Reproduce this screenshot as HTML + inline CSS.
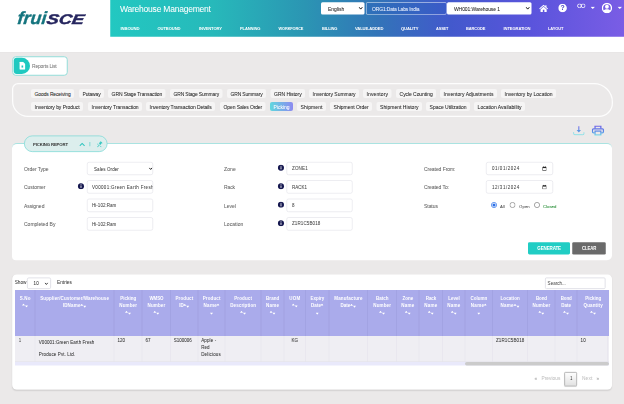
<!DOCTYPE html>
<html lang="en"><head><meta charset="utf-8"><title>Warehouse Management - Picking Report</title>
<style>
html,body{margin:0;padding:0}
body{width:624px;height:404px;overflow:hidden;position:relative;background:#ebe9e9;font-family:"Liberation Sans",sans-serif;}
#sc{position:absolute;left:0;top:0;width:2496px;height:1616px;transform:scale(.25);transform-origin:0 0}
.t{position:absolute;white-space:nowrap;display:block}
.n{-webkit-text-stroke:0.16px currentColor}
svg{display:block}
</style></head>
<body>
<div id="sc">
<div style="position:absolute;left:0px;top:0px;width:2496px;height:208px;background:#fff;box-shadow:0 1.6px 4.8px rgba(0,0,0,.07)"></div>
<div style="position:absolute;left:441.2px;top:0px;width:2054.8px;height:146.8px;background:linear-gradient(90deg,#22c8c1 0%,#27b9ba 20%,#2b95b3 38%,#3274b8 52%,#4259cc 66%,#5a54dc 82%,#7a5de5 100%)"></div>
<div style="position:absolute;left:67.6px;top:28px;height:88px;line-height:88px;white-space:nowrap;font-style:italic;font-weight:700;"><span style="display:inline-block;font-size:70.4px;color:#15757f;-webkit-text-stroke:1.4px #15757f;transform-origin:0 80%;transform:scaleX(1.02) skewX(-6deg)">frui</span><span style="display:inline-block;font-size:56px;color:#26265f;-webkit-text-stroke:1.8px #26265f;transform-origin:0 80%;transform:scaleX(1.30) skewX(-8deg);margin-left:2.4px">SCE</span></div>
<span class="t n" id="t0" style="left:480px;top:12.2px;font-size:34px;line-height:47.6px;color:#fff;font-weight:400;letter-spacing:-0.89px;">Warehouse Management</span>
<span class="t" id="t1" style="left:482px;top:101.28px;font-size:17px;line-height:23.8px;color:#fff;font-weight:700;letter-spacing:-0.51px;transform-origin:0 50%;transform:scaleX(0.9945);">INBOUND</span>
<span class="t" id="t2" style="left:630px;top:101.28px;font-size:17px;line-height:23.8px;color:#fff;font-weight:700;letter-spacing:-0.51px;transform-origin:0 50%;transform:scaleX(0.9705);">OUTBOUND</span>
<span class="t" id="t3" style="left:796px;top:101.28px;font-size:17px;line-height:23.8px;color:#fff;font-weight:700;letter-spacing:-0.51px;transform-origin:0 50%;transform:scaleX(0.9754);">INVENTORY</span>
<span class="t" id="t4" style="left:960px;top:101.28px;font-size:17px;line-height:23.8px;color:#fff;font-weight:700;letter-spacing:-0.51px;transform-origin:0 50%;transform:scaleX(0.9606);">PLANNING</span>
<span class="t" id="t5" style="left:1114px;top:101.28px;font-size:17px;line-height:23.8px;color:#fff;font-weight:700;letter-spacing:-0.51px;transform-origin:0 50%;transform:scaleX(0.9138);">WORKFORCE</span>
<span class="t" id="t6" style="left:1288px;top:101.28px;font-size:17px;line-height:23.8px;color:#fff;font-weight:700;letter-spacing:-0.51px;transform-origin:0 50%;transform:scaleX(0.9524);">BILLING</span>
<span class="t" id="t7" style="left:1420px;top:101.28px;font-size:17px;line-height:23.8px;color:#fff;font-weight:700;letter-spacing:-0.51px;transform-origin:0 50%;transform:scaleX(0.9701);">VALUE-ADDED</span>
<span class="t" id="t8" style="left:1604px;top:101.28px;font-size:17px;line-height:23.8px;color:#fff;font-weight:700;letter-spacing:-0.51px;transform-origin:0 50%;transform:scaleX(0.9764);">QUALITY</span>
<span class="t" id="t9" style="left:1744px;top:101.28px;font-size:17px;line-height:23.8px;color:#fff;font-weight:700;letter-spacing:-0.51px;transform-origin:0 50%;transform:scaleX(0.9118);">ASSET</span>
<span class="t" id="t10" style="left:1864px;top:101.28px;font-size:17px;line-height:23.8px;color:#fff;font-weight:700;letter-spacing:-0.51px;transform-origin:0 50%;transform:scaleX(0.9390);">BARCODE</span>
<span class="t" id="t11" style="left:2014px;top:101.28px;font-size:17px;line-height:23.8px;color:#fff;font-weight:700;letter-spacing:-0.51px;transform-origin:0 50%;transform:scaleX(0.9738);">INTEGRATION</span>
<span class="t" id="t12" style="left:2192px;top:101.28px;font-size:17px;line-height:23.8px;color:#fff;font-weight:700;letter-spacing:-0.51px;transform-origin:0 50%;transform:scaleX(0.9401);">LAYOUT</span>
<div style="position:absolute;left:1284px;top:8.8px;width:174px;height:49.2px;background:#fff;border-radius:6px"></div>
<span class="t n" id="t13" style="left:1312px;top:21.2px;font-size:20px;line-height:28px;color:#222;font-weight:400;letter-spacing:-0px;">English</span>
<svg style="position:absolute;left:1434.4px;top:26.4px" width="17.6" height="14.4" viewBox="0 0 8 6"><path d="M1 1 L4 4.5 L7 1" fill="none" stroke="#111" stroke-width="1.8"/></svg>
<div style="position:absolute;left:1464px;top:8.8px;width:322px;height:49.2px;box-sizing:border-box;border:2.4px solid rgba(255,255,255,.85);border-radius:6px;background:rgba(40,90,190,.25)"></div>
<span class="t n" id="t14" style="left:1488px;top:21.2px;font-size:20px;line-height:28px;color:#eef3ff;font-weight:400;letter-spacing:-0.6px;transform-origin:0 50%;transform:scaleX(0.9961);">ORG1:Data Labs India</span>
<div style="position:absolute;left:1788px;top:8.8px;width:338px;height:49.2px;background:#fff;border-radius:6px"></div>
<span class="t n" id="t15" style="left:1816px;top:21.2px;font-size:20px;line-height:28px;color:#222;font-weight:400;letter-spacing:-0.4px;">WH001:Warehouse 1</span>
<svg style="position:absolute;left:2102.4px;top:26.4px" width="17.6" height="14.4" viewBox="0 0 8 6"><path d="M1 1 L4 4.5 L7 1" fill="none" stroke="#111" stroke-width="1.8"/></svg>
<svg style="position:absolute;left:2156px;top:17.2px" width="36.8" height="30.8" viewBox="0 0 24 20"><path d="M12 1 L0.5 11 L2.3 12.8 L12 4.6 L21.7 12.8 L23.5 11 L19.5 7.5 V2.5 H16.5 V4.9 Z M12 6.6 L4 13.4 V20 H10 V14 H14 V20 H20 V13.4 Z" fill="#fff"/></svg>
<svg style="position:absolute;left:2233.2px;top:15.2px" width="34.4" height="34.4" viewBox="0 0 20 20"><circle cx="10" cy="10" r="10" fill="#fff"/><text x="10" y="15.6" font-size="16" font-weight="700" text-anchor="middle" fill="#4742c4" font-family="Liberation Sans, sans-serif">?</text></svg>
<svg style="position:absolute;left:2308px;top:14.4px" width="34.4" height="18.4" viewBox="0 0 26 14"><rect x="1.5" y="1.5" width="12" height="11" rx="5.5" fill="none" stroke="#fff" stroke-width="2.6"/><rect x="12.5" y="1.5" width="12" height="11" rx="5.5" fill="none" stroke="#fff" stroke-width="2.6"/></svg>
<svg style="position:absolute;left:2361.6px;top:25.6px" width="18.4" height="10.4" viewBox="0 0 10 5"><path d="M0 0 H10 L5 5 Z" fill="#fff"/></svg>
<svg style="position:absolute;left:2407.2px;top:11.2px" width="41.6" height="41.6" viewBox="0 0 24 24"><circle cx="12" cy="12" r="10.4" fill="none" stroke="#fff" stroke-width="3.2"/><circle cx="12" cy="9.2" r="4.4" fill="#fff"/><path d="M3.8 19 C5.5 13.8 18.5 13.8 20.2 19 C17 23 7 23 3.8 19 Z" fill="#fff"/></svg>
<svg style="position:absolute;left:2470.4px;top:25.6px" width="18.4" height="10.4" viewBox="0 0 10 5"><path d="M0 0 H10 L5 5 Z" fill="#fff"/></svg>
<div style="position:absolute;left:48.8px;top:224.8px;width:222.4px;height:78.4px;box-sizing:border-box;background:#fff;border:4px solid #93ddd9;border-radius:13.6px"></div>
<div style="position:absolute;left:54.8px;top:230.8px;width:65.2px;height:65.6px;background:#20c9c0;border-radius:12px 32.8px 32.8px 12px"></div>
<svg style="position:absolute;left:77.2px;top:247.2px" width="24.8" height="31.6" viewBox="0 0 14 19"><path d="M0 1.5 Q0 0 1.5 0 H8.5 L14 5.5 V17.5 Q14 19 12.5 19 H1.5 Q0 19 0 17.5 Z" fill="#fff"/><rect x="5" y="9" width="4" height="5" fill="#22c7c0"/></svg>
<span class="t n" id="t16" style="left:128px;top:250px;font-size:20px;line-height:28px;color:#777;font-weight:400;letter-spacing:-0.6px;transform-origin:0 50%;transform:scaleX(0.9888);">Reports List</span>
<div style="position:absolute;left:48px;top:332px;width:2404px;height:136px;box-sizing:border-box;border:5px solid #fdfdfd;border-radius:24px 76px 56px 64px;background:#ebe9e9"></div>
<div style="position:absolute;left:124px;top:356.4px;width:172px;height:36px;border-radius:8px;background:#f6f5f5"></div>
<span class="t n" id="t17" style="left:138.4px;top:362.6px;font-size:20px;line-height:28px;color:#222;font-weight:400;letter-spacing:-0.55px;">Goods Receiving</span>
<div style="position:absolute;left:316px;top:356.4px;width:100px;height:36px;border-radius:8px;background:#f6f5f5"></div>
<span class="t n" id="t18" style="left:330.4px;top:362.6px;font-size:20px;line-height:28px;color:#222;font-weight:400;letter-spacing:-0.6px;transform-origin:0 50%;transform:scaleX(0.9928);">Putaway</span>
<div style="position:absolute;left:432px;top:356.4px;width:230px;height:36px;border-radius:8px;background:#f6f5f5"></div>
<span class="t n" id="t19" style="left:446.4px;top:362.6px;font-size:20px;line-height:28px;color:#222;font-weight:400;letter-spacing:-0.44px;">GRN Stage Transaction</span>
<div style="position:absolute;left:680px;top:356.4px;width:210px;height:36px;border-radius:8px;background:#f6f5f5"></div>
<span class="t n" id="t20" style="left:694.4px;top:362.6px;font-size:20px;line-height:28px;color:#222;font-weight:400;letter-spacing:-0.6px;transform-origin:0 50%;transform:scaleX(0.9935);">GRN Stage Summary</span>
<div style="position:absolute;left:908px;top:356.4px;width:156px;height:36px;border-radius:8px;background:#f6f5f5"></div>
<span class="t n" id="t21" style="left:922.4px;top:362.6px;font-size:20px;line-height:28px;color:#222;font-weight:400;letter-spacing:-0.6px;transform-origin:0 50%;transform:scaleX(0.9924);">GRN Summary</span>
<div style="position:absolute;left:1082px;top:356.4px;width:138px;height:36px;border-radius:8px;background:#f6f5f5"></div>
<span class="t n" id="t22" style="left:1096.4px;top:362.6px;font-size:20px;line-height:28px;color:#222;font-weight:400;letter-spacing:-0.2px;">GRN History</span>
<div style="position:absolute;left:1236px;top:356.4px;width:200px;height:36px;border-radius:8px;background:#f6f5f5"></div>
<span class="t n" id="t23" style="left:1250.4px;top:362.6px;font-size:20px;line-height:28px;color:#222;font-weight:400;letter-spacing:-0.08px;">Inventory Summary</span>
<div style="position:absolute;left:1452px;top:356.4px;width:114px;height:36px;border-radius:8px;background:#f6f5f5"></div>
<span class="t n" id="t24" style="left:1466.4px;top:362.6px;font-size:20px;line-height:28px;color:#222;font-weight:400;letter-spacing:0.41px;">Inventory</span>
<div style="position:absolute;left:1584px;top:356.4px;width:160px;height:36px;border-radius:8px;background:#f6f5f5"></div>
<span class="t n" id="t25" style="left:1598.4px;top:362.6px;font-size:20px;line-height:28px;color:#222;font-weight:400;letter-spacing:-0.26px;">Cycle Counting</span>
<div style="position:absolute;left:1760px;top:356.4px;width:228px;height:36px;border-radius:8px;background:#f6f5f5"></div>
<span class="t n" id="t26" style="left:1774.4px;top:362.6px;font-size:20px;line-height:28px;color:#222;font-weight:400;letter-spacing:0.15px;">Inventory Adjustments</span>
<div style="position:absolute;left:2004px;top:356.4px;width:220px;height:36px;border-radius:8px;background:#f6f5f5"></div>
<span class="t n" id="t27" style="left:2018.4px;top:362.6px;font-size:20px;line-height:28px;color:#222;font-weight:400;letter-spacing:0.09px;">Inventory by Location</span>
<div style="position:absolute;left:124px;top:407.6px;width:208px;height:36px;border-radius:8px;background:#f6f5f5"></div>
<span class="t n" id="t28" style="left:138.4px;top:413.8px;font-size:20px;line-height:28px;color:#222;font-weight:400;letter-spacing:-0.17px;">Inventory by Product</span>
<div style="position:absolute;left:352px;top:407.6px;width:216px;height:36px;border-radius:8px;background:#f6f5f5"></div>
<span class="t n" id="t29" style="left:366.4px;top:413.8px;font-size:20px;line-height:28px;color:#222;font-weight:400;letter-spacing:-0.15px;">Inventory Transaction</span>
<div style="position:absolute;left:584px;top:407.6px;width:276px;height:36px;border-radius:8px;background:#f6f5f5"></div>
<span class="t n" id="t30" style="left:598.4px;top:413.8px;font-size:20px;line-height:28px;color:#222;font-weight:400;letter-spacing:-0.34px;">Inventory Transaction Details</span>
<div style="position:absolute;left:880px;top:407.6px;width:182px;height:36px;border-radius:8px;background:#f6f5f5"></div>
<span class="t n" id="t31" style="left:894.4px;top:413.8px;font-size:20px;line-height:28px;color:#222;font-weight:400;letter-spacing:-0.45px;">Open Sales Order</span>
<div style="position:absolute;left:1080px;top:407.6px;width:92px;height:36px;border-radius:8px;background:linear-gradient(90deg,#5fd8de,#8d8af0)"></div>
<span class="t n" id="t32" style="left:1094.4px;top:413.8px;font-size:20px;line-height:28px;color:#fff;font-weight:400;letter-spacing:-0.07px;">Picking</span>
<div style="position:absolute;left:1188px;top:407.6px;width:116px;height:36px;border-radius:8px;background:#f6f5f5"></div>
<span class="t n" id="t33" style="left:1202.4px;top:413.8px;font-size:20px;line-height:28px;color:#222;font-weight:400;letter-spacing:0.44px;">Shipment</span>
<div style="position:absolute;left:1320px;top:407.6px;width:168px;height:36px;border-radius:8px;background:#f6f5f5"></div>
<span class="t n" id="t34" style="left:1334.4px;top:413.8px;font-size:20px;line-height:28px;color:#222;font-weight:400;letter-spacing:-0.08px;">Shipment Order</span>
<div style="position:absolute;left:1506px;top:407.6px;width:182px;height:36px;border-radius:8px;background:#f6f5f5"></div>
<span class="t n" id="t35" style="left:1520.4px;top:413.8px;font-size:20px;line-height:28px;color:#222;font-weight:400;letter-spacing:0.11px;">Shipment History</span>
<div style="position:absolute;left:1704px;top:407.6px;width:176px;height:36px;border-radius:8px;background:#f6f5f5"></div>
<span class="t n" id="t36" style="left:1718.4px;top:413.8px;font-size:20px;line-height:28px;color:#222;font-weight:400;letter-spacing:-0.06px;">Space Utilization</span>
<div style="position:absolute;left:1896px;top:407.6px;width:204px;height:36px;border-radius:8px;background:#f6f5f5"></div>
<span class="t n" id="t37" style="left:1910.4px;top:413.8px;font-size:20px;line-height:28px;color:#222;font-weight:400;letter-spacing:0.09px;">Location Availability</span>
<svg style="position:absolute;left:2292.4px;top:502.4px" width="46.4" height="40" viewBox="0 0 23.2 20"><defs><linearGradient id="g1" gradientUnits="userSpaceOnUse" x1="0" y1="0" x2="0" y2="20"><stop offset="0" stop-color="#8b78ea"/><stop offset="0.55" stop-color="#5f95e4"/><stop offset="1" stop-color="#74dfe6"/></linearGradient></defs><path d="M11.6 1.6 V11.4" fill="none" stroke="url(#g1)" stroke-width="2.4"/><path d="M7.2 8.8 H16 L11.6 14 Z" fill="#5f98e3"/><path d="M1.2 13.6 V16 Q1.2 18.6 3.8 18.6 H19.4 Q22 18.6 22 16 V13.6" fill="none" stroke="#7cdfe8" stroke-width="1.9"/></svg>
<svg style="position:absolute;left:2367.2px;top:502.4px" width="49.6" height="40.8" viewBox="0 0 24.8 20.4"><defs><linearGradient id="g2" gradientUnits="userSpaceOnUse" x1="0" y1="0" x2="0" y2="20.4"><stop offset="0" stop-color="#7263e8"/><stop offset="0.55" stop-color="#5a84e6"/><stop offset="1" stop-color="#6fdde8"/></linearGradient></defs><path d="M6.6 6.4 V1.4 H18.2 V6.4" fill="none" stroke="url(#g2)" stroke-width="2.6"/><path d="M6 14.6 H3.4 Q1.4 14.6 1.4 12.6 V8.6 Q1.4 6.6 3.4 6.6 H21.4 Q23.4 6.6 23.4 8.6 V12.6 Q23.4 14.6 21.4 14.6 H18.8" fill="none" stroke="url(#g2)" stroke-width="2.6"/><rect x="6.6" y="11.2" width="11.6" height="7.8" fill="none" stroke="url(#g2)" stroke-width="2.4"/></svg>
<div style="position:absolute;left:48px;top:572px;width:2400px;height:468.8px;box-sizing:border-box;background:#fff;border-top:4px solid #a9e3e1;border-radius:20px 20px 20px 16px"></div>
<div style="position:absolute;left:96px;top:542px;width:334px;height:66px;box-sizing:border-box;background:#dceeed;border:3.6px solid #7cd9d5;border-radius:33.2px"></div>
<span class="t" id="t38" style="left:132px;top:565.72px;font-size:17px;line-height:23.8px;color:#333;font-weight:700;letter-spacing:-0.47px;">PICKING REPORT</span>
<svg style="position:absolute;left:316.8px;top:569.6px" width="23.2" height="15.6" viewBox="0 0 10 6"><path d="M0.8 5.3 L5 1.3 L9.2 5.3" fill="none" stroke="#2cc4be" stroke-width="1.75"/></svg>
<div style="position:absolute;left:358.4px;top:568px;width:2.6px;height:17.2px;background:#62d0cb"></div>
<svg style="position:absolute;left:386.4px;top:562.8px" width="25.6" height="28" viewBox="0 0 13 14"><path d="M8.2 0.4 L12.6 4.8 L10.2 5.2 L8.4 8.6 L4.4 4.6 L7.8 2.8 Z" fill="#30c6c0"/><path d="M5.6 7.4 L1.2 12.4 L2.4 13 L6.8 8.6 Z" fill="#30c6c0"/><path d="M1.6 5.4 L4.2 7.2 L2.8 8.4 Z M8.6 10.2 L10.4 13 L7.2 11.4 Z" fill="#30c6c0"/></svg>
<span class="t n" id="t39" style="left:96px;top:662px;font-size:20px;line-height:28px;color:#626262;font-weight:400;letter-spacing:-0.21px;">Order Type</span>
<span class="t n" id="t40" style="left:96px;top:735.6px;font-size:20px;line-height:28px;color:#626262;font-weight:400;letter-spacing:-0.14px;">Customer</span>
<span class="t n" id="t41" style="left:96px;top:809.2px;font-size:20px;line-height:28px;color:#626262;font-weight:400;letter-spacing:-0.09px;">Assigned</span>
<span class="t n" id="t42" style="left:96px;top:883.2px;font-size:20px;line-height:28px;color:#626262;font-weight:400;letter-spacing:-0px;">Completed By</span>
<div style="position:absolute;left:348px;top:647.6px;width:264px;height:52.8px;box-sizing:border-box;background:#fff;border:2.8px solid #dadae2;border-radius:8px"></div>
<span class="t n" id="t43" style="left:376px;top:663.8px;font-size:18px;line-height:25.2px;color:#444;font-weight:400;letter-spacing:0.31px;">Sales Order</span>
<svg style="position:absolute;left:594.8px;top:669.2px" width="15.2" height="12" viewBox="0 0 8 6"><path d="M1 1 L4 4.5 L7 1" fill="none" stroke="#222" stroke-width="2"/></svg>
<div style="position:absolute;left:348px;top:721.2px;width:264px;height:52.8px;box-sizing:border-box;background:#fff;border:2.8px solid #dadae2;border-radius:8px"></div>
<div style="position:absolute;left:368px;top:728px;width:241.6px;height:40px;overflow:hidden"><span class="t n" id="t44" style="left:0px;top:9.4px;font-size:18px;line-height:25.2px;color:#444;font-weight:400;letter-spacing:1.3px;">V00001:Green Earth Fresh</span></div>
<div style="position:absolute;left:348px;top:794.8px;width:264px;height:52.8px;box-sizing:border-box;background:#fff;border:2.8px solid #dadae2;border-radius:8px"></div>
<span class="t n" id="t45" style="left:368px;top:811px;font-size:18px;line-height:25.2px;color:#444;font-weight:400;letter-spacing:0.14px;">Hi-102:Ram</span>
<div style="position:absolute;left:348px;top:868.8px;width:264px;height:52.8px;box-sizing:border-box;background:#fff;border:2.8px solid #dadae2;border-radius:8px"></div>
<span class="t n" id="t46" style="left:368px;top:885px;font-size:18px;line-height:25.2px;color:#444;font-weight:400;letter-spacing:0.14px;">Hi-102:Ram</span>
<svg style="position:absolute;left:311.2px;top:731.6px" width="25.6" height="25.6" viewBox="0 0 16 16"><circle cx="8" cy="8" r="7.6" fill="#15174f"/><rect x="7" y="6.6" width="2.2" height="5.6" fill="#fff"/><circle cx="8.1" cy="4.4" r="1.3" fill="#fff"/></svg>
<span class="t n" id="t47" style="left:896px;top:662px;font-size:20px;line-height:28px;color:#626262;font-weight:400;letter-spacing:0.5px;">Zone</span>
<span class="t n" id="t48" style="left:896px;top:735.6px;font-size:20px;line-height:28px;color:#626262;font-weight:400;letter-spacing:-0.49px;">Rack</span>
<span class="t n" id="t49" style="left:896px;top:809.2px;font-size:20px;line-height:28px;color:#626262;font-weight:400;letter-spacing:-0.04px;">Level</span>
<span class="t n" id="t50" style="left:896px;top:883.2px;font-size:20px;line-height:28px;color:#626262;font-weight:400;letter-spacing:0.25px;">Location</span>
<div style="position:absolute;left:1146px;top:647.6px;width:264px;height:52.8px;box-sizing:border-box;background:#fff;border:2.8px solid #dadae2;border-radius:8px"></div>
<span class="t n" id="t51" style="left:1168px;top:662.2px;font-size:18px;line-height:25.2px;color:#444;font-weight:400;letter-spacing:0.68px;">ZONE1</span>
<svg style="position:absolute;left:1111.2px;top:658.4px" width="25.6" height="25.6" viewBox="0 0 16 16"><circle cx="8" cy="8" r="7.6" fill="#15174f"/><rect x="7" y="6.6" width="2.2" height="5.6" fill="#fff"/><circle cx="8.1" cy="4.4" r="1.3" fill="#fff"/></svg>
<div style="position:absolute;left:1146px;top:721.2px;width:264px;height:52.8px;box-sizing:border-box;background:#fff;border:2.8px solid #dadae2;border-radius:8px"></div>
<span class="t n" id="t52" style="left:1168px;top:735.8px;font-size:18px;line-height:25.2px;color:#444;font-weight:400;letter-spacing:-0.12px;">RACK1</span>
<svg style="position:absolute;left:1111.2px;top:732px" width="25.6" height="25.6" viewBox="0 0 16 16"><circle cx="8" cy="8" r="7.6" fill="#15174f"/><rect x="7" y="6.6" width="2.2" height="5.6" fill="#fff"/><circle cx="8.1" cy="4.4" r="1.3" fill="#fff"/></svg>
<div style="position:absolute;left:1146px;top:794.8px;width:264px;height:52.8px;box-sizing:border-box;background:#fff;border:2.8px solid #dadae2;border-radius:8px"></div>
<span class="t n" id="t53" style="left:1168px;top:809.4px;font-size:18px;line-height:25.2px;color:#444;font-weight:400;letter-spacing:1.42px;">8</span>
<svg style="position:absolute;left:1111.2px;top:805.6px" width="25.6" height="25.6" viewBox="0 0 16 16"><circle cx="8" cy="8" r="7.6" fill="#15174f"/><rect x="7" y="6.6" width="2.2" height="5.6" fill="#fff"/><circle cx="8.1" cy="4.4" r="1.3" fill="#fff"/></svg>
<div style="position:absolute;left:1146px;top:868.8px;width:264px;height:52.8px;box-sizing:border-box;background:#fff;border:2.8px solid #dadae2;border-radius:8px"></div>
<span class="t n" id="t54" style="left:1168px;top:883.4px;font-size:18px;line-height:25.2px;color:#444;font-weight:400;letter-spacing:0.44px;">Z1R1C5B018</span>
<svg style="position:absolute;left:1111.2px;top:879.6px" width="25.6" height="25.6" viewBox="0 0 16 16"><circle cx="8" cy="8" r="7.6" fill="#15174f"/><rect x="7" y="6.6" width="2.2" height="5.6" fill="#fff"/><circle cx="8.1" cy="4.4" r="1.3" fill="#fff"/></svg>
<span class="t n" id="t55" style="left:1696px;top:662px;font-size:20px;line-height:28px;color:#626262;font-weight:400;letter-spacing:-0.26px;">Created From:</span>
<span class="t n" id="t56" style="left:1696px;top:735.6px;font-size:20px;line-height:28px;color:#626262;font-weight:400;letter-spacing:-0.31px;">Created To:</span>
<span class="t n" id="t57" style="left:1696px;top:809.2px;font-size:20px;line-height:28px;color:#626262;font-weight:400;letter-spacing:-0.18px;">Status</span>
<div style="position:absolute;left:1944px;top:647.6px;width:268px;height:52.8px;box-sizing:border-box;background:#fff;border:2.8px solid #dadae2;border-radius:8px"></div>
<span class="t n" id="t58" style="left:1968px;top:662.2px;font-size:18px;line-height:25.2px;color:#444;font-weight:400;letter-spacing:2.13px;">01/01/2024</span>
<svg style="position:absolute;left:2168.8px;top:665.2px" width="17.6" height="18.4" viewBox="0 0 11 12"><rect x="0" y="1.4" width="11" height="10.6" rx="1.2" fill="#222"/><rect x="1.6" y="4.8" width="7.8" height="5.6" fill="#fff"/><rect x="2.2" y="0" width="1.6" height="3" fill="#222"/><rect x="7.2" y="0" width="1.6" height="3" fill="#222"/></svg>
<div style="position:absolute;left:1944px;top:721.2px;width:268px;height:52.8px;box-sizing:border-box;background:#fff;border:2.8px solid #dadae2;border-radius:8px"></div>
<span class="t n" id="t59" style="left:1968px;top:735.8px;font-size:18px;line-height:25.2px;color:#444;font-weight:400;letter-spacing:2.13px;">12/31/2024</span>
<svg style="position:absolute;left:2168.8px;top:738.8px" width="17.6" height="18.4" viewBox="0 0 11 12"><rect x="0" y="1.4" width="11" height="10.6" rx="1.2" fill="#222"/><rect x="1.6" y="4.8" width="7.8" height="5.6" fill="#fff"/><rect x="2.2" y="0" width="1.6" height="3" fill="#222"/><rect x="7.2" y="0" width="1.6" height="3" fill="#222"/></svg>
<svg style="position:absolute;left:1964px;top:808px" width="24" height="24" viewBox="0 0 16 16"><circle cx="8" cy="8" r="7" fill="#fff" stroke="#2a6fe8" stroke-width="1.8"/><circle cx="8" cy="8" r="4.2" fill="#2a6fe8"/></svg>
<svg style="position:absolute;left:2038px;top:808px" width="24" height="24" viewBox="0 0 16 16"><circle cx="8" cy="8" r="7" fill="#fff" stroke="#666" stroke-width="1.5"/></svg>
<svg style="position:absolute;left:2136px;top:808px" width="24" height="24" viewBox="0 0 16 16"><circle cx="8" cy="8" r="7" fill="#fff" stroke="#666" stroke-width="1.5"/></svg>
<span class="t n" id="t60" style="left:2000px;top:813.72px;font-size:17px;line-height:23.8px;color:#555;font-weight:400;letter-spacing:0.82px;">All</span>
<span class="t n" id="t61" style="left:2076px;top:813.72px;font-size:17px;line-height:23.8px;color:#555;font-weight:400;letter-spacing:0.44px;">Open</span>
<span class="t n" id="t62" style="left:2172px;top:813.72px;font-size:17px;line-height:23.8px;color:#1e8a2e;font-weight:400;letter-spacing:0.07px;">Closed</span>
<div style="position:absolute;left:2112px;top:968.8px;width:168px;height:49.6px;background:#21cdc4;border-radius:5.6px"></div>
<span class="t" id="t63" style="left:2149.2px;top:979.6px;font-size:20px;line-height:28px;color:#fff;font-weight:700;letter-spacing:-0.6px;transform-origin:0 50%;transform:scaleX(0.9042);">GENERATE</span>
<div style="position:absolute;left:2288.8px;top:968.8px;width:134.4px;height:49.6px;background:#6a6a6a;border-radius:5.2px"></div>
<span class="t" id="t64" style="left:2328px;top:979.6px;font-size:20px;line-height:28px;color:#fff;font-weight:700;letter-spacing:-0.6px;transform-origin:0 50%;transform:scaleX(0.8620);">CLEAR</span>
<div style="position:absolute;left:48.8px;top:1097.6px;width:2399.6px;height:460.8px;background:#fff;border-radius:18px;box-shadow:0 2.4px 5.6px rgba(0,0,0,.10)"></div>
<span class="t n" id="t65" style="left:58.8px;top:1117.08px;font-size:19px;line-height:26.6px;color:#444;font-weight:400;letter-spacing:-0.2px;">Show</span>
<div style="position:absolute;left:108px;top:1110px;width:96px;height:46px;box-sizing:border-box;background:#fff;border:3px solid #d8d8e0;border-radius:7.2px"></div>
<span class="t n" id="t66" style="left:134px;top:1121px;font-size:18px;line-height:25.2px;color:#333;font-weight:400;letter-spacing:0.7px;">10</span>
<svg style="position:absolute;left:178.4px;top:1128.8px" width="15.2" height="12" viewBox="0 0 8 6"><path d="M1 1 L4 4.5 L7 1" fill="none" stroke="#222" stroke-width="1.8"/></svg>
<span class="t n" id="t67" style="left:228px;top:1117.08px;font-size:19px;line-height:26.6px;color:#444;font-weight:400;letter-spacing:0.05px;">Entries</span>
<div style="position:absolute;left:2180px;top:1110px;width:242px;height:46px;box-sizing:border-box;background:#fff;border:3px solid #d8d8e0;border-radius:5.6px"></div>
<span class="t n" id="t68" style="left:2190.4px;top:1122.6px;font-size:18px;line-height:25.2px;color:#555;font-weight:400;letter-spacing:0.11px;">Search...</span>
<div style="position:absolute;left:60px;top:1160px;width:2376px;height:184px;background:#aaabeb"></div>
<div style="position:absolute;left:60px;top:1344px;width:2376px;height:104px;background:#efeef3;box-sizing:border-box;border-bottom:2px solid #e0e0e8"></div>
<div style="position:absolute;left:60px;top:1448px;width:2376px;height:14px;background:#e9e9fb"></div>
<div style="position:absolute;left:1860px;top:1448px;width:576px;height:13.6px;background:#cbcbcb;border-radius:6.8px"></div>
<div style="position:absolute;left:139px;top:1160px;width:2px;height:184px;background:rgba(150,150,215,.75)"></div>
<div style="position:absolute;left:139px;top:1344px;width:2px;height:103.2px;background:#e2e1ea"></div>
<div style="position:absolute;left:455px;top:1160px;width:2px;height:184px;background:rgba(150,150,215,.75)"></div>
<div style="position:absolute;left:455px;top:1344px;width:2px;height:103.2px;background:#e2e1ea"></div>
<div style="position:absolute;left:567px;top:1160px;width:2px;height:184px;background:rgba(150,150,215,.75)"></div>
<div style="position:absolute;left:567px;top:1344px;width:2px;height:103.2px;background:#e2e1ea"></div>
<div style="position:absolute;left:681px;top:1160px;width:2px;height:184px;background:rgba(150,150,215,.75)"></div>
<div style="position:absolute;left:681px;top:1344px;width:2px;height:103.2px;background:#e2e1ea"></div>
<div style="position:absolute;left:791px;top:1160px;width:2px;height:184px;background:rgba(150,150,215,.75)"></div>
<div style="position:absolute;left:791px;top:1344px;width:2px;height:103.2px;background:#e2e1ea"></div>
<div style="position:absolute;left:899px;top:1160px;width:2px;height:184px;background:rgba(150,150,215,.75)"></div>
<div style="position:absolute;left:899px;top:1344px;width:2px;height:103.2px;background:#e2e1ea"></div>
<div style="position:absolute;left:1043px;top:1160px;width:2px;height:184px;background:rgba(150,150,215,.75)"></div>
<div style="position:absolute;left:1043px;top:1344px;width:2px;height:103.2px;background:#e2e1ea"></div>
<div style="position:absolute;left:1135px;top:1160px;width:2px;height:184px;background:rgba(150,150,215,.75)"></div>
<div style="position:absolute;left:1135px;top:1344px;width:2px;height:103.2px;background:#e2e1ea"></div>
<div style="position:absolute;left:1221px;top:1160px;width:2px;height:184px;background:rgba(150,150,215,.75)"></div>
<div style="position:absolute;left:1221px;top:1344px;width:2px;height:103.2px;background:#e2e1ea"></div>
<div style="position:absolute;left:1315px;top:1160px;width:2px;height:184px;background:rgba(150,150,215,.75)"></div>
<div style="position:absolute;left:1315px;top:1344px;width:2px;height:103.2px;background:#e2e1ea"></div>
<div style="position:absolute;left:1469px;top:1160px;width:2px;height:184px;background:rgba(150,150,215,.75)"></div>
<div style="position:absolute;left:1469px;top:1344px;width:2px;height:103.2px;background:#e2e1ea"></div>
<div style="position:absolute;left:1585px;top:1160px;width:2px;height:184px;background:rgba(150,150,215,.75)"></div>
<div style="position:absolute;left:1585px;top:1344px;width:2px;height:103.2px;background:#e2e1ea"></div>
<div style="position:absolute;left:1675px;top:1160px;width:2px;height:184px;background:rgba(150,150,215,.75)"></div>
<div style="position:absolute;left:1675px;top:1344px;width:2px;height:103.2px;background:#e2e1ea"></div>
<div style="position:absolute;left:1769px;top:1160px;width:2px;height:184px;background:rgba(150,150,215,.75)"></div>
<div style="position:absolute;left:1769px;top:1344px;width:2px;height:103.2px;background:#e2e1ea"></div>
<div style="position:absolute;left:1859px;top:1160px;width:2px;height:184px;background:rgba(150,150,215,.75)"></div>
<div style="position:absolute;left:1859px;top:1344px;width:2px;height:103.2px;background:#e2e1ea"></div>
<div style="position:absolute;left:1969px;top:1160px;width:2px;height:184px;background:rgba(150,150,215,.75)"></div>
<div style="position:absolute;left:1969px;top:1344px;width:2px;height:103.2px;background:#e2e1ea"></div>
<div style="position:absolute;left:2109px;top:1160px;width:2px;height:184px;background:rgba(150,150,215,.75)"></div>
<div style="position:absolute;left:2109px;top:1344px;width:2px;height:103.2px;background:#e2e1ea"></div>
<div style="position:absolute;left:2219px;top:1160px;width:2px;height:184px;background:rgba(150,150,215,.75)"></div>
<div style="position:absolute;left:2219px;top:1344px;width:2px;height:103.2px;background:#e2e1ea"></div>
<div style="position:absolute;left:2307px;top:1160px;width:2px;height:184px;background:rgba(150,150,215,.75)"></div>
<div style="position:absolute;left:2307px;top:1344px;width:2px;height:103.2px;background:#e2e1ea"></div>
<div style="position:absolute;left:2428px;top:1344px;width:2px;height:103.2px;background:#e2e1ea"></div>
<span class="t" id="t69" style="left:79px;top:1182.6px;font-size:18px;line-height:25.2px;color:#fff;font-weight:700;letter-spacing:0.61px;">S.No</span>
<span style="position:absolute;left:88px;top:1214px;line-height:0"><svg class="s" width="24" height="16.4" viewBox="0 0 11.2 7.6"><path d="M0 3.8 L2.8 0 L5.6 3.8 Z M5.6 3.8 L8.4 7.6 L11.2 3.8 Z" fill="#fff"/></svg></span>
<span class="t" id="t70" style="left:161px;top:1182.6px;font-size:18px;line-height:25.2px;color:#fff;font-weight:700;letter-spacing:0.48px;">Supplier/Customer/Warehouse</span>
<span class="t" id="t71" style="left:251px;top:1211.4px;font-size:18px;line-height:25.2px;color:#fff;font-weight:700;letter-spacing:0.73px;">IDName</span>
<span style="position:absolute;left:321.4px;top:1215.2px;line-height:0"><svg class="s" width="24" height="16.4" viewBox="0 0 11.2 7.6"><path d="M0 3.8 L2.8 0 L5.6 3.8 Z M5.6 3.8 L8.4 7.6 L11.2 3.8 Z" fill="#fff"/></svg></span>
<span class="t" id="t72" style="left:481px;top:1182.6px;font-size:18px;line-height:25.2px;color:#fff;font-weight:700;letter-spacing:-0.08px;">Picking</span>
<span class="t" id="t73" style="left:477px;top:1211.4px;font-size:18px;line-height:25.2px;color:#fff;font-weight:700;letter-spacing:0.57px;">Number</span>
<span style="position:absolute;left:500px;top:1242.8px;line-height:0"><svg class="s" width="24" height="16.4" viewBox="0 0 11.2 7.6"><path d="M0 3.8 L2.8 0 L5.6 3.8 Z M5.6 3.8 L8.4 7.6 L11.2 3.8 Z" fill="#fff"/></svg></span>
<span class="t" id="t74" style="left:598px;top:1182.6px;font-size:18px;line-height:25.2px;color:#fff;font-weight:700;letter-spacing:-0.54px;transform-origin:0 50%;transform:scaleX(0.9928);">WMSO</span>
<span class="t" id="t75" style="left:590px;top:1211.4px;font-size:18px;line-height:25.2px;color:#fff;font-weight:700;letter-spacing:0.57px;">Number</span>
<span style="position:absolute;left:613px;top:1242.8px;line-height:0"><svg class="s" width="24" height="16.4" viewBox="0 0 11.2 7.6"><path d="M0 3.8 L2.8 0 L5.6 3.8 Z M5.6 3.8 L8.4 7.6 L11.2 3.8 Z" fill="#fff"/></svg></span>
<span class="t" id="t76" style="left:702px;top:1182.6px;font-size:18px;line-height:25.2px;color:#fff;font-weight:700;letter-spacing:0.49px;">Product</span>
<span class="t" id="t77" style="left:717px;top:1211.4px;font-size:18px;line-height:25.2px;color:#fff;font-weight:700;letter-spacing:-0.28px;">ID</span>
<span style="position:absolute;left:733.4px;top:1215.2px;line-height:0"><svg class="s" width="24" height="16.4" viewBox="0 0 11.2 7.6"><path d="M0 3.8 L2.8 0 L5.6 3.8 Z M5.6 3.8 L8.4 7.6 L11.2 3.8 Z" fill="#fff"/></svg></span>
<span class="t" id="t78" style="left:811px;top:1182.6px;font-size:18px;line-height:25.2px;color:#fff;font-weight:700;letter-spacing:0.49px;">Product</span>
<span class="t" id="t79" style="left:814.4px;top:1211.4px;font-size:18px;line-height:25.2px;color:#fff;font-weight:700;letter-spacing:1.1px;">Name</span>
<span style="position:absolute;left:866px;top:1214px;line-height:0"><svg class="s" width="12" height="16.4" viewBox="0 0 5.6 7.6"><path d="M0 3.8 L2.8 0 L5.6 3.8 Z" fill="#fff"/></svg></span>
<span style="position:absolute;left:840px;top:1242.8px;line-height:0"><svg class="s" width="12" height="16.4" viewBox="0 0 5.6 7.6"><path d="M0 3.8 L2.8 7.6 L5.6 3.8 Z" fill="#fff"/></svg></span>
<span class="t" id="t80" style="left:937px;top:1182.6px;font-size:18px;line-height:25.2px;color:#fff;font-weight:700;letter-spacing:0.49px;">Product</span>
<span class="t" id="t81" style="left:921px;top:1211.4px;font-size:18px;line-height:25.2px;color:#fff;font-weight:700;letter-spacing:0.4px;">Description</span>
<span style="position:absolute;left:960px;top:1242.8px;line-height:0"><svg class="s" width="24" height="16.4" viewBox="0 0 11.2 7.6"><path d="M0 3.8 L2.8 0 L5.6 3.8 Z M5.6 3.8 L8.4 7.6 L11.2 3.8 Z" fill="#fff"/></svg></span>
<span class="t" id="t82" style="left:1064px;top:1182.6px;font-size:18px;line-height:25.2px;color:#fff;font-weight:700;letter-spacing:0.28px;">Brand</span>
<span class="t" id="t83" style="left:1064px;top:1211.4px;font-size:18px;line-height:25.2px;color:#fff;font-weight:700;letter-spacing:1.1px;">Name</span>
<span style="position:absolute;left:1078px;top:1242.8px;line-height:0"><svg class="s" width="24" height="16.4" viewBox="0 0 11.2 7.6"><path d="M0 3.8 L2.8 0 L5.6 3.8 Z M5.6 3.8 L8.4 7.6 L11.2 3.8 Z" fill="#fff"/></svg></span>
<span class="t" id="t84" style="left:1157px;top:1182.6px;font-size:18px;line-height:25.2px;color:#fff;font-weight:700;letter-spacing:1.15px;">UOM</span>
<span style="position:absolute;left:1167px;top:1214px;line-height:0"><svg class="s" width="24" height="16.4" viewBox="0 0 11.2 7.6"><path d="M0 3.8 L2.8 0 L5.6 3.8 Z M5.6 3.8 L8.4 7.6 L11.2 3.8 Z" fill="#fff"/></svg></span>
<span class="t" id="t85" style="left:1242px;top:1182.6px;font-size:18px;line-height:25.2px;color:#fff;font-weight:700;letter-spacing:0.07px;">Expiry</span>
<span class="t" id="t86" style="left:1244.4px;top:1211.4px;font-size:18px;line-height:25.2px;color:#fff;font-weight:700;letter-spacing:0.11px;">Date</span>
<span style="position:absolute;left:1282px;top:1214px;line-height:0"><svg class="s" width="12" height="16.4" viewBox="0 0 5.6 7.6"><path d="M0 3.8 L2.8 0 L5.6 3.8 Z" fill="#fff"/></svg></span>
<span style="position:absolute;left:1263px;top:1242.8px;line-height:0"><svg class="s" width="12" height="16.4" viewBox="0 0 5.6 7.6"><path d="M0 3.8 L2.8 7.6 L5.6 3.8 Z" fill="#fff"/></svg></span>
<span class="t" id="t87" style="left:1337px;top:1182.6px;font-size:18px;line-height:25.2px;color:#fff;font-weight:700;letter-spacing:0.58px;">Manufacture</span>
<span class="t" id="t88" style="left:1362px;top:1211.4px;font-size:18px;line-height:25.2px;color:#fff;font-weight:700;letter-spacing:0.11px;">Date</span>
<span style="position:absolute;left:1400.4px;top:1215.2px;line-height:0"><svg class="s" width="24" height="16.4" viewBox="0 0 11.2 7.6"><path d="M0 3.8 L2.8 0 L5.6 3.8 Z M5.6 3.8 L8.4 7.6 L11.2 3.8 Z" fill="#fff"/></svg></span>
<span class="t" id="t89" style="left:1504px;top:1182.6px;font-size:18px;line-height:25.2px;color:#fff;font-weight:700;letter-spacing:-0.12px;">Batch</span>
<span class="t" id="t90" style="left:1493px;top:1211.4px;font-size:18px;line-height:25.2px;color:#fff;font-weight:700;letter-spacing:0.57px;">Number</span>
<span style="position:absolute;left:1516px;top:1242.8px;line-height:0"><svg class="s" width="24" height="16.4" viewBox="0 0 11.2 7.6"><path d="M0 3.8 L2.8 0 L5.6 3.8 Z M5.6 3.8 L8.4 7.6 L11.2 3.8 Z" fill="#fff"/></svg></span>
<span class="t" id="t91" style="left:1610px;top:1182.6px;font-size:18px;line-height:25.2px;color:#fff;font-weight:700;letter-spacing:0.11px;">Zone</span>
<span class="t" id="t92" style="left:1605px;top:1211.4px;font-size:18px;line-height:25.2px;color:#fff;font-weight:700;letter-spacing:1.1px;">Name</span>
<span style="position:absolute;left:1619px;top:1242.8px;line-height:0"><svg class="s" width="24" height="16.4" viewBox="0 0 11.2 7.6"><path d="M0 3.8 L2.8 0 L5.6 3.8 Z M5.6 3.8 L8.4 7.6 L11.2 3.8 Z" fill="#fff"/></svg></span>
<span class="t" id="t93" style="left:1703px;top:1182.6px;font-size:18px;line-height:25.2px;color:#fff;font-weight:700;letter-spacing:-0.4px;">Rack</span>
<span class="t" id="t94" style="left:1697px;top:1211.4px;font-size:18px;line-height:25.2px;color:#fff;font-weight:700;letter-spacing:1.1px;">Name</span>
<span style="position:absolute;left:1711px;top:1242.8px;line-height:0"><svg class="s" width="24" height="16.4" viewBox="0 0 11.2 7.6"><path d="M0 3.8 L2.8 0 L5.6 3.8 Z M5.6 3.8 L8.4 7.6 L11.2 3.8 Z" fill="#fff"/></svg></span>
<span class="t" id="t95" style="left:1793px;top:1182.6px;font-size:18px;line-height:25.2px;color:#fff;font-weight:700;letter-spacing:-0.12px;">Level</span>
<span class="t" id="t96" style="left:1789px;top:1211.4px;font-size:18px;line-height:25.2px;color:#fff;font-weight:700;letter-spacing:1.1px;">Name</span>
<span style="position:absolute;left:1803px;top:1242.8px;line-height:0"><svg class="s" width="24" height="16.4" viewBox="0 0 11.2 7.6"><path d="M0 3.8 L2.8 0 L5.6 3.8 Z M5.6 3.8 L8.4 7.6 L11.2 3.8 Z" fill="#fff"/></svg></span>
<span class="t" id="t97" style="left:1882px;top:1182.6px;font-size:18px;line-height:25.2px;color:#fff;font-weight:700;letter-spacing:0.07px;">Column</span>
<span class="t" id="t98" style="left:1883.4px;top:1211.4px;font-size:18px;line-height:25.2px;color:#fff;font-weight:700;letter-spacing:1.1px;">Name</span>
<span style="position:absolute;left:1935px;top:1214px;line-height:0"><svg class="s" width="12" height="16.4" viewBox="0 0 5.6 7.6"><path d="M0 3.8 L2.8 0 L5.6 3.8 Z" fill="#fff"/></svg></span>
<span style="position:absolute;left:1909px;top:1242.8px;line-height:0"><svg class="s" width="12" height="16.4" viewBox="0 0 5.6 7.6"><path d="M0 3.8 L2.8 7.6 L5.6 3.8 Z" fill="#fff"/></svg></span>
<span class="t" id="t99" style="left:2002px;top:1182.6px;font-size:18px;line-height:25.2px;color:#fff;font-weight:700;letter-spacing:0.3px;">Location</span>
<span class="t" id="t100" style="left:2002px;top:1211.4px;font-size:18px;line-height:25.2px;color:#fff;font-weight:700;letter-spacing:1.1px;">Name</span>
<span style="position:absolute;left:2054.4px;top:1215.2px;line-height:0"><svg class="s" width="24" height="16.4" viewBox="0 0 11.2 7.6"><path d="M0 3.8 L2.8 0 L5.6 3.8 Z M5.6 3.8 L8.4 7.6 L11.2 3.8 Z" fill="#fff"/></svg></span>
<span class="t" id="t101" style="left:2144px;top:1182.6px;font-size:18px;line-height:25.2px;color:#fff;font-weight:700;letter-spacing:-0.54px;transform-origin:0 50%;transform:scaleX(0.9912);">Bond</span>
<span class="t" id="t102" style="left:2130px;top:1211.4px;font-size:18px;line-height:25.2px;color:#fff;font-weight:700;letter-spacing:0.57px;">Number</span>
<span style="position:absolute;left:2153px;top:1242.8px;line-height:0"><svg class="s" width="24" height="16.4" viewBox="0 0 11.2 7.6"><path d="M0 3.8 L2.8 0 L5.6 3.8 Z M5.6 3.8 L8.4 7.6 L11.2 3.8 Z" fill="#fff"/></svg></span>
<span class="t" id="t103" style="left:2243px;top:1182.6px;font-size:18px;line-height:25.2px;color:#fff;font-weight:700;letter-spacing:-0.54px;transform-origin:0 50%;transform:scaleX(0.9912);">Bond</span>
<span class="t" id="t104" style="left:2245px;top:1211.4px;font-size:18px;line-height:25.2px;color:#fff;font-weight:700;letter-spacing:0.11px;">Date</span>
<span style="position:absolute;left:2252px;top:1242.8px;line-height:0"><svg class="s" width="24" height="16.4" viewBox="0 0 11.2 7.6"><path d="M0 3.8 L2.8 0 L5.6 3.8 Z M5.6 3.8 L8.4 7.6 L11.2 3.8 Z" fill="#fff"/></svg></span>
<span class="t" id="t105" style="left:2341px;top:1182.6px;font-size:18px;line-height:25.2px;color:#fff;font-weight:700;letter-spacing:-0.08px;">Picking</span>
<span class="t" id="t106" style="left:2334px;top:1211.4px;font-size:18px;line-height:25.2px;color:#fff;font-weight:700;letter-spacing:0.55px;">Quantity</span>
<span style="position:absolute;left:2360px;top:1242.8px;line-height:0"><svg class="s" width="24" height="16.4" viewBox="0 0 11.2 7.6"><path d="M0 3.8 L2.8 0 L5.6 3.8 Z M5.6 3.8 L8.4 7.6 L11.2 3.8 Z" fill="#fff"/></svg></span>
<span class="t n" id="t107" style="left:76px;top:1349px;font-size:18px;line-height:25.2px;color:#333;font-weight:400;letter-spacing:-0.54px;transform-origin:0 50%;transform:scaleX(0.7852);">1</span>
<span class="t n" id="t108" style="left:155.2px;top:1359px;font-size:18px;line-height:25.2px;color:#333;font-weight:400;letter-spacing:0.25px;">V00001:Green Earth Fresh</span>
<span class="t n" id="t109" style="left:155.2px;top:1407.4px;font-size:18px;line-height:25.2px;color:#333;font-weight:400;letter-spacing:0.48px;">Produce Pvt. Ltd.</span>
<span class="t n" id="t110" style="left:470px;top:1349px;font-size:18px;line-height:25.2px;color:#333;font-weight:400;letter-spacing:-0.2px;">120</span>
<span class="t n" id="t111" style="left:582px;top:1349px;font-size:18px;line-height:25.2px;color:#333;font-weight:400;letter-spacing:-0.3px;">67</span>
<span class="t n" id="t112" style="left:694.8px;top:1349px;font-size:18px;line-height:25.2px;color:#333;font-weight:400;letter-spacing:0.08px;">S100006</span>
<span class="t n" id="t113" style="left:804.8px;top:1350.6px;font-size:18px;line-height:25.2px;color:#333;font-weight:400;letter-spacing:0.51px;">Apple -</span>
<span class="t n" id="t114" style="left:804.8px;top:1379.4px;font-size:18px;line-height:25.2px;color:#333;font-weight:400;letter-spacing:-0.13px;">Red</span>
<span class="t n" id="t115" style="left:804.8px;top:1407.4px;font-size:18px;line-height:25.2px;color:#333;font-weight:400;letter-spacing:0.62px;">Delicious</span>
<span class="t n" id="t116" style="left:1166.4px;top:1349px;font-size:18px;line-height:25.2px;color:#333;font-weight:400;letter-spacing:-0.49px;">KG</span>
<span class="t n" id="t117" style="left:1984px;top:1349px;font-size:18px;line-height:25.2px;color:#333;font-weight:400;letter-spacing:0.44px;">Z1R1C5B018</span>
<span class="t n" id="t118" style="left:2322.4px;top:1349px;font-size:18px;line-height:25.2px;color:#333;font-weight:400;letter-spacing:0.1px;">10</span>
<span class="t n" id="t119" style="left:2137.6px;top:1500.2px;font-size:18px;line-height:25.2px;color:#9a9a9a;font-weight:400;letter-spacing:0.22px;">«</span>
<span class="t n" id="t120" style="left:2165.6px;top:1501.08px;font-size:19px;line-height:26.6px;color:#c2c2c2;font-weight:400;letter-spacing:0.25px;">Previous</span>
<div style="position:absolute;left:2256.8px;top:1488px;width:51.2px;height:56.8px;box-sizing:border-box;border:3.2px solid #a3a3a3;border-radius:4.8px;background:linear-gradient(#fefefe,#e2e2e2);box-shadow:0 1.6px 3.2px rgba(0,0,0,.15)"></div>
<span class="t n" id="t121" style="left:2280.8px;top:1502.6px;font-size:18px;line-height:25.2px;color:#333;font-weight:400;letter-spacing:-0.54px;transform-origin:0 50%;transform:scaleX(0.8274);">1</span>
<span class="t n" id="t122" style="left:2328px;top:1501.08px;font-size:19px;line-height:26.6px;color:#c2c2c2;font-weight:400;letter-spacing:0.61px;">Next</span>
<span class="t n" id="t123" style="left:2385.6px;top:1500.2px;font-size:18px;line-height:25.2px;color:#9a9a9a;font-weight:400;letter-spacing:0.22px;">»</span>
</div>
</body></html>
